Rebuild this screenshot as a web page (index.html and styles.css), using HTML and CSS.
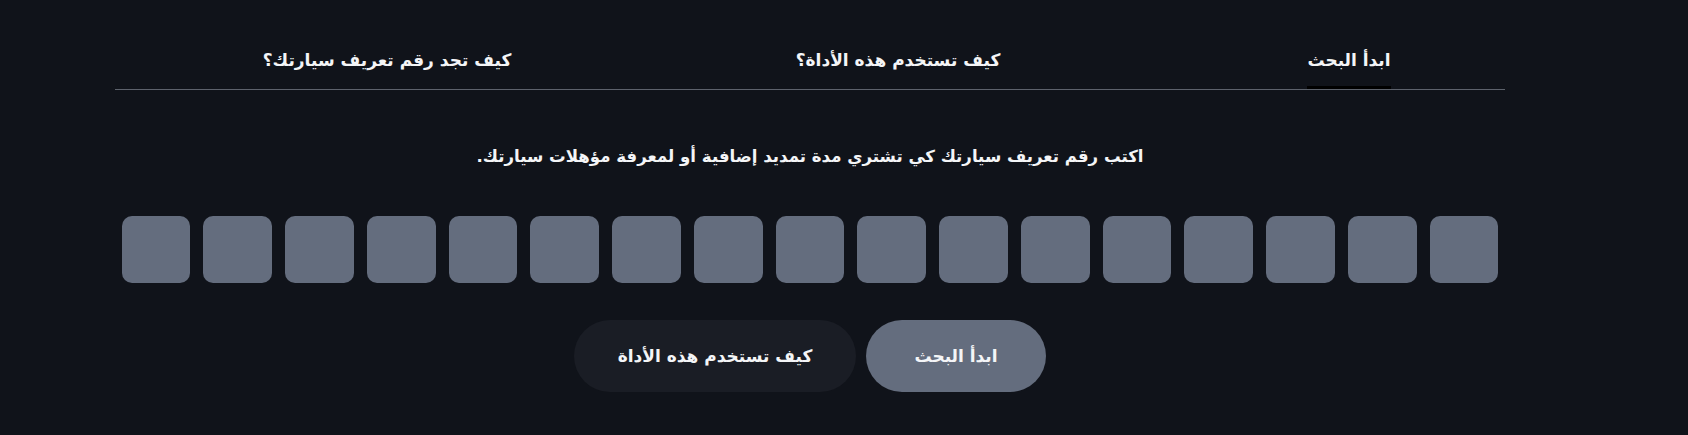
FILE: index.html
```html
<!DOCTYPE html>
<html lang="ar" dir="rtl">
<head>
<meta charset="utf-8">
<title>رقم تعريف السيارة</title>
<link rel="stylesheet" href="styles.css">
</head>
<body>
<main class="page">
  <nav class="tabs">
    <div class="tab tab-1"><span class="tab-label active">ابدأ البحث</span></div>
    <div class="tab tab-2"><span class="tab-label">كيف تستخدم هذه الأداة؟</span></div>
    <div class="tab tab-3"><span class="tab-label">كيف تجد رقم تعريف سيارتك؟</span></div>
  </nav>
  <p class="intro">اكتب رقم تعريف سيارتك كي تشتري مدة تمديد إضافية أو لمعرفة مؤهلات سيارتك.</p>
  <div class="vin">
    <div class="cell"></div><div class="cell"></div><div class="cell"></div><div class="cell"></div>
    <div class="cell"></div><div class="cell"></div><div class="cell"></div><div class="cell"></div>
    <div class="cell"></div><div class="cell"></div><div class="cell"></div><div class="cell"></div>
    <div class="cell"></div><div class="cell"></div><div class="cell"></div><div class="cell"></div>
    <div class="cell"></div>
  </div>
  <div class="actions">
    <button class="btn btn-primary" type="button">ابدأ البحث</button>
    <button class="btn btn-secondary" type="button">كيف تستخدم هذه الأداة</button>
  </div>
</main>
</body>
</html>
```
FILE: styles.css
```css
html, body {
  margin: 0;
  padding: 0;
  background: #10131a;
}
body {
  direction: rtl;
  font-family: "DejaVu Sans", "Noto Sans", sans-serif;
  color: #f4f5f7;
  width: 1688px;
  height: 435px;
  overflow: hidden;
}
.page {
  width: 1390px;
  margin-left: 115px;
  margin-right: 183px;
}
.tabs {
  display: flex;
  flex-direction: row;
  padding-top: 48px;
  padding-right: 26px;
  border-bottom: 1px solid #5d626c;
}
.tab {
  width: 260px;
  display: flex;
  justify-content: center;
}
.tab-2 { margin-right: 191px; }
.tab-3 { margin-right: 251px; }
.tab-label {
  display: inline-block;
  font-size: 17px;
  font-weight: 700;
  line-height: 24px;
  padding-bottom: 14px;
  border-bottom: 3px solid transparent;
  white-space: nowrap;
}
.tab-label.active {
  border-bottom-color: #000;
}
.intro {
  margin: 53px 0 0;
  text-align: center;
  font-size: 16.6px;
  font-weight: 700;
  line-height: 28px;
}
.vin {
  display: flex;
  justify-content: center;
  gap: 13px;
  margin-top: 45px;
}
.cell {
  width: 68.75px;
  height: 67px;
  border-radius: 10px;
  background: #646d7e;
}
.actions {
  display: flex;
  justify-content: center;
  gap: 10px;
  margin-top: 37px;
}
.btn {
  height: 72px;
  border: 0;
  border-radius: 36px;
  font-family: "DejaVu Sans", "Noto Sans", sans-serif;
  font-size: 17px;
  font-weight: 700;
  color: #f4f5f7;
  padding: 0;
  cursor: pointer;
}
.btn-primary {
  width: 180px;
  background: #646d7e;
}
.btn-secondary {
  width: 282px;
  background: #1a1d25;
}
```
